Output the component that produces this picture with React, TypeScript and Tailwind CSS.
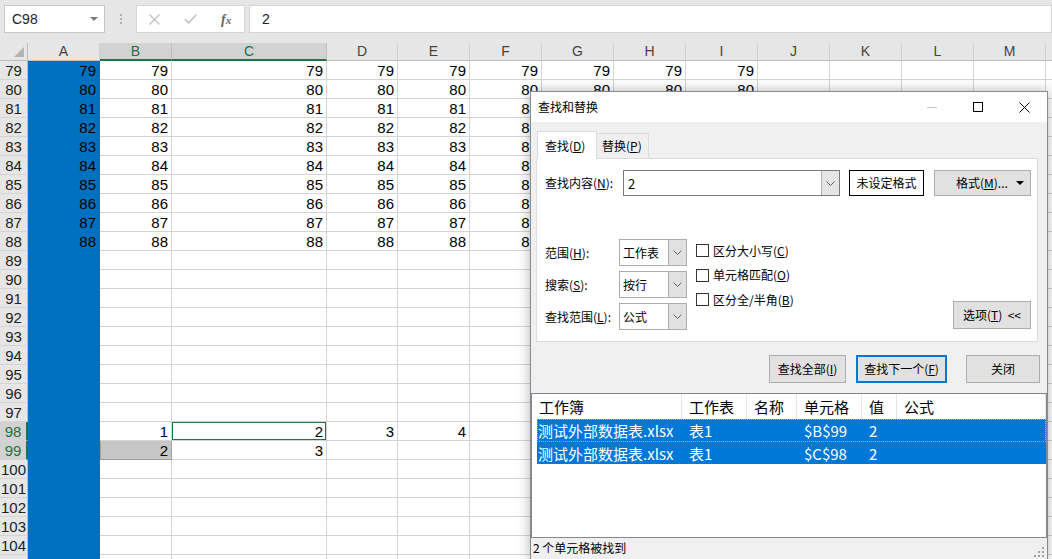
import React from 'react';

const COLS = [
	{ key: 'A', w: 'w-[72px]' },
	{ key: 'B', w: 'w-[72px]' },
	{ key: 'C', w: 'w-[155px]' },
	{ key: 'D', w: 'w-[71px]' },
	{ key: 'E', w: 'w-[72px]' },
	{ key: 'F', w: 'w-[72px]' },
	{ key: 'G', w: 'w-[72px]' },
	{ key: 'H', w: 'w-[72px]' },
	{ key: 'I', w: 'w-[72px]' },
	{ key: 'J', w: 'w-[72px]' },
	{ key: 'K', w: 'w-[72px]' },
	{ key: 'L', w: 'w-[72px]' },
	{ key: 'M', w: 'w-[72px]' },
	{ key: 'N', w: 'w-[72px]' },
];

const ROWS = Array.from({ length: 27 }, (_, i) => 79 + i);

const cellValue = (row: number, col: string): string => {
	if (row <= 88 && 'ABCDEFGHI'.includes(col)) return String(row);
	if (row === 98) return ({ B: '1', C: '2', D: '3', E: '4' } as Record<string, string>)[col] ?? '';
	if (row === 99) return ({ B: '2', C: '3' } as Record<string, string>)[col] ?? '';
	return '';
};

const Chevron = () => (
	<svg width="9" height="5" viewBox="0 0 9 5" fill="none" stroke="#606060" strokeWidth="1">
		<path d="M0.5 0.5 L4.5 4.5 L8.5 0.5" />
	</svg>
);

const Select = ({ value }: { value: string }) => (
	<div className="flex w-[68px] h-[27px] border border-[#adadad] bg-white">
		<div className="flex-1 pl-[3px] flex items-center">{value}</div>
		<div className="w-[18px] bg-[#e1e1e1] border-l border-[#adadad] flex items-center justify-center">
			<Chevron />
		</div>
	</div>
);

const Checkbox = ({ label, k }: { label: string; k: string }) => (
	<div className="flex items-center h-[13px]">
		<div className="w-[13px] h-[13px] border border-[#333] bg-white" />
		<span className="ml-[4px]">
			{label}(<span className="underline">{k}</span>)
		</span>
	</div>
);

const Button = ({ children, className = '' }: { children: React.ReactNode; className?: string }) => (
	<div className={`h-[28px] bg-[#e1e1e1] border border-[#adadad] flex items-center justify-center ${className}`}>
		{children}
	</div>
);

const FindDialog = () => (
	<div className="absolute left-[530px] top-[91px] w-[518px] h-[470px] bg-[#f0f0f0] border border-[#8a8a8a] shadow-[0_0_12px_rgba(0,0,0,0.3)] flex flex-col text-[12px] text-black font-['Noto_Sans_CJK_SC','Noto_Sans',sans-serif] leading-none">
		{/* title bar */}
		<div className="h-[30px] bg-white flex items-center pl-[7px] shrink-0">
			<span className="-mt-[1px]">查找和替换</span>
			<div className="ml-auto flex h-full">
				<div className="w-[46px] flex items-center justify-center">
					<div className="w-[10px] h-px bg-[#c8c8c8]" />
				</div>
				<div className="w-[46px] flex items-center justify-center">
					<div className="w-[10px] h-[10px] border border-black" />
				</div>
				<div className="w-[46px] flex items-center justify-center">
					<svg width="11" height="11" viewBox="0 0 11 11" stroke="#000" strokeWidth="1">
						<path d="M0.5 0.5 L10.5 10.5 M10.5 0.5 L0.5 10.5" />
					</svg>
				</div>
			</div>
		</div>

		{/* tabs */}
		<div className="mt-[8px] ml-[6px] flex items-end h-[28px] shrink-0">
			<div className="w-[60px] h-[28px] bg-white border-t border-l border-r border-[#dcdcdc] -mb-px relative z-10 flex items-center pl-[7px]">
				查找(<span className="underline">D</span>)
			</div>
			<div className="w-[52px] h-[25px] border-t border-r border-[#dcdcdc] flex items-center pl-[5px]">
				替换(<span className="underline">P</span>)
			</div>
		</div>

		{/* panel */}
		<div className="ml-[5px] w-[502px] h-[184px] bg-white border border-[#dcdcdc] pl-[8px] pr-[6px] pt-[11px] shrink-0">
			<div className="flex items-center h-[26px]">
				<div className="w-[78px]">
					查找内容(<span className="underline">N</span>):
				</div>
				<div className="flex w-[217px] h-[26px] border border-[#7a7a7a] bg-white">
					<div className="flex-1 pl-[4px] flex items-center text-[13px]">2</div>
					<div className="w-[18px] bg-[#e5e5e5] border-l border-[#b0b0b0] flex items-center justify-center">
						<Chevron />
					</div>
				</div>
				<div className="ml-[9px] w-[75px] h-[26px] border border-black bg-white flex items-center justify-center">未设定格式</div>
				<div className="ml-[10px] w-[97px] h-[26px] bg-[#e1e1e1] border border-[#adadad] flex items-center">
					<span className="ml-[21px]">
						格式(<span className="underline">M</span>)...
					</span>
					<svg className="ml-auto mr-[6px]" width="8" height="4" viewBox="0 0 8 4">
						<path d="M0 0 L8 0 L4 4 Z" fill="#000" />
					</svg>
				</div>
			</div>

			<div className="mt-[43px] flex">
				<div className="flex flex-col gap-[5px]">
					{[
						['范围', 'H', '工作表'],
						['搜索', 'S', '按行'],
						['查找范围', 'L', '公式'],
					].map(([label, k, v]) => (
						<div key={k} className="flex items-center h-[27px]">
							<div className="w-[74px]">
								{label}(<span className="underline">{k}</span>):
							</div>
							<Select value={v} />
						</div>
					))}
				</div>
				<div className="ml-[9px] pt-[5px] flex flex-col gap-[11.5px]">
					<Checkbox label="区分大小写" k="C" />
					<Checkbox label="单元格匹配" k="O" />
					<Checkbox label="区分全/半角" k="B" />
				</div>
				<Button className="ml-auto self-end mb-[1px] w-[78px]">
					选项(<span className="underline">T</span>)&nbsp;&nbsp;&lt;&lt;
				</Button>
			</div>
		</div>

		{/* buttons */}
		<div className="mt-[13px] flex justify-end pr-[7px] shrink-0">
			<Button className="w-[77px]">
				查找全部(<span className="underline">I</span>)
			</Button>
			<div className="ml-[10px] w-[91px] h-[28px] bg-[#e1e1e1] border-2 border-[#0078d7] flex items-center justify-center">
				查找下一个(<span className="underline">F</span>)
			</div>
			<Button className="ml-[19px] w-[74px]">关闭</Button>
		</div>

		{/* results list */}
		<div className="mt-[10px] h-[145px] bg-white border border-[#828790] text-[15px] shrink-0">
			<div className="flex h-[25px]">
				{[
					['工作簿', 'w-[150px]'],
					['工作表', 'w-[65px]'],
					['名称', 'w-[50px]'],
					['单元格', 'w-[65px]'],
					['值', 'w-[35px]'],
					['公式', 'flex-1'],
				].map(([t, w]) => (
					<div key={t} className={`${w} h-full border-r border-[#e5e5e5] flex items-center pl-[7px]`}>
						{t}
					</div>
				))}
			</div>
			{[
				['$B$99', 'h-[23px] outline-1 outline-dotted outline-[#e8a040] -outline-offset-1'],
				['$C$98', 'h-[22px]'],
			].map(([cell, cls]) => (
				<div key={cell} className={`ml-[5px] flex items-center bg-[#0078d7] text-white ${cls}`}>
					<div className="w-[145px] pl-[1px]">测试外部数据表.xlsx</div>
					<div className="w-[65px] pl-[7px]">表1</div>
					<div className="w-[50px]" />
					<div className="w-[65px] pl-[7px]">{cell}</div>
					<div className="w-[35px] pl-[7px]">2</div>
				</div>
			))}
		</div>

		{/* status */}
		<div className="flex-1 flex items-center pl-[2px] pb-[2px] relative">
			<span>2 个单元格被找到</span>
			<svg className="absolute right-[3px] bottom-[3px]" width="10" height="10" viewBox="0 0 10 10" fill="#a0a0a0">
				<rect x="8" y="0" width="2" height="2" />
				<rect x="4" y="4" width="2" height="2" />
				<rect x="8" y="4" width="2" height="2" />
				<rect x="0" y="8" width="2" height="2" />
				<rect x="4" y="8" width="2" height="2" />
				<rect x="8" y="8" width="2" height="2" />
			</svg>
		</div>
	</div>
);

export default function App() {
	return (
		<div className="relative w-[1052px] h-[559px] overflow-hidden bg-white font-['Liberation_Sans',sans-serif] text-black">
			{/* formula bar */}
			<div className="h-[43px] bg-[#e6e6e6] flex items-start pt-[5px]">
				<div className="ml-[4px] w-[101px] h-[28px] bg-white border border-[#c6c6c6] flex items-center pl-[7px] text-[14px] text-[#222]">
					C98
					<svg className="ml-auto mr-[6px]" width="8" height="4" viewBox="0 0 8 4">
						<path d="M0 0 L8 0 L4 4 Z" fill="#7a7a7a" />
					</svg>
				</div>
				<div className="w-[31px] h-[28px] flex flex-col items-center justify-center gap-[2px]">
					<div className="w-[2px] h-[2px] bg-[#b0b0b0]" />
					<div className="w-[2px] h-[2px] bg-[#b0b0b0]" />
					<div className="w-[2px] h-[2px] bg-[#b0b0b0]" />
				</div>
				<div className="w-[109px] h-[28px] bg-white border border-[#d4d4d4] flex items-center">
					<div className="w-[36px] flex justify-center">
						<svg width="11" height="11" viewBox="0 0 11 11" stroke="#c0c0c0" strokeWidth="1.3">
							<path d="M0.5 0.5 L10.5 10.5 M10.5 0.5 L0.5 10.5" />
						</svg>
					</div>
					<div className="w-[36px] flex justify-center">
						<svg width="13" height="10" viewBox="0 0 13 10" fill="none" stroke="#c0c0c0" strokeWidth="1.6">
							<path d="M0.8 5 L4.5 8.8 L12.3 0.8" />
						</svg>
					</div>
					<div className="w-[36px] flex justify-center font-['Liberation_Serif',serif] italic font-bold text-[14px] text-[#666]">
						<span>f</span>
						<span className="text-[11px] mt-[3px]">x</span>
					</div>
				</div>
				<div className="ml-[4px] flex-1 h-[28px] bg-white border border-[#d4d4d4] flex items-center pl-[12px] text-[14px] text-[#222]">2</div>
			</div>

			{/* column headers */}
			<div className="flex h-[18px] bg-[#e6e6e6]">
				<div className="w-[28px] shrink-0 h-full border-r border-b border-[#bdbdbd] relative">
					<svg className="absolute right-[3px] bottom-[3px]" width="10" height="10" viewBox="0 0 10 10">
						<path d="M10 0 L10 10 L0 10 Z" fill="#b4b4b4" />
					</svg>
				</div>
				{COLS.map((c) => {
					const hi = c.key === 'B' || c.key === 'C';
					return (
						<div
							key={c.key}
							className={`${c.w} shrink-0 h-full border-r flex items-center justify-center text-[14px] ${
								hi
									? 'bg-[#d2d2d2] text-[#217346] border-r-[#bdbdbd] border-b-2 border-b-[#217346]'
									: 'text-[#444] border-r-[#d0d0d0] border-b border-b-[#bdbdbd]'
							}`}
						>
							{c.key}
						</div>
					);
				})}
			</div>

			{/* rows */}
			{ROWS.map((r) => {
				const hiRow = r === 98 || r === 99;
				return (
					<div key={r} className="flex h-[19px]">
						<div
							className={`w-[28px] shrink-0 h-full border-b border-[#d4d4d4] flex items-center justify-center pt-[2px] text-[15px] ${
								hiRow ? 'bg-[#d2d2d2] text-[#217346] border-r-2 border-r-[#217346]' : 'bg-[#e6e6e6] text-[#222] border-r border-r-[#bdbdbd]'
							}`}
						>
							{r}
						</div>
						{COLS.map((c) => {
							const v = cellValue(r, c.key);
							let tone = 'border-[#d4d4d4]';
							if (c.key === 'A') tone = 'bg-[#0070c0] border-[#0070c0]';
							else if (r === 99 && c.key === 'B') tone = 'bg-[#c6c6c6] border-[#a0a0a0] border-l';
							const active = r === 98 && c.key === 'C';
							return (
								<div
									key={c.key}
									className={`${c.w} shrink-0 h-full border-r border-b ${tone} text-[15px] leading-[18px] text-right`}
								>
									{active ? (
										<div className="h-full border border-[#217346] pr-[2px] leading-[18px]">{v}</div>
									) : (
										<div className="pr-[3px] pt-[1px]">{v}</div>
									)}
								</div>
							);
						})}
					</div>
				);
			})}

			<FindDialog />
		</div>
	);
}
